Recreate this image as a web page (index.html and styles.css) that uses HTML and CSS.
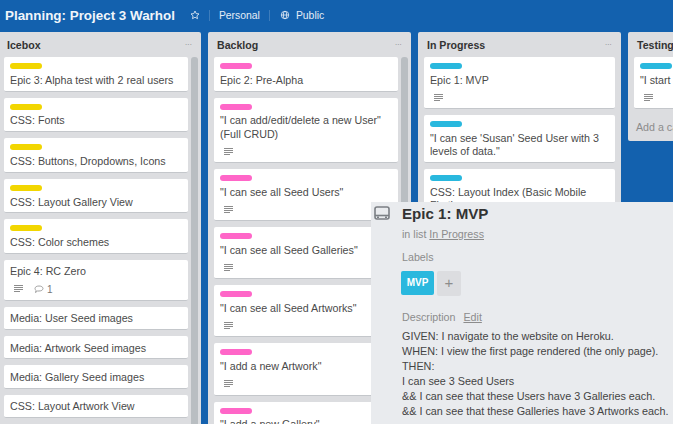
FILE: index.html
```html
<!DOCTYPE html>
<html lang="en">
<head>
    <meta charset="UTF-8">
    <meta name="viewport" content="width=device-width, initial-scale=1.0">
    <title>Planning: Project 3 Warhol</title>
    <link rel="stylesheet" href="styles.css">
</head>
<body>
    <header class="board-header">
        <h1 class="board-title">Planning: Project 3 Warhol</h1>
        <svg class="header-icon star" viewBox="0 0 12 12"><path d="M6 1.2l1.4 3.1 3.4.4-2.5 2.3.7 3.4L6 8.7l-3 1.7.7-3.4L1.200 4.700l3.400-.4z"/></svg>
        <span class="header-sep"></span>
        <span class="header-btn">Personal</span>
        <span class="header-sep"></span>
        <svg class="header-icon globe" viewBox="0 0 12 12"><circle cx="6" cy="6" r="4.500"/><ellipse cx="6" cy="6" rx="2" ry="4.500"/><path d="M1.500 6h9"/></svg>
        <span class="header-btn">Public</span>
    </header>

    <main class="board">
        <section class="list">
            <div class="list-head"><h2>Icebox</h2><span class="list-menu">···</span></div>
            <div class="list-body">
                <div class="cards">
                    <div class="card"><span class="label yellow"></span><p>Epic 3: Alpha test with 2 real users</p></div>
                    <div class="card"><span class="label yellow"></span><p>CSS: Fonts</p></div>
                    <div class="card"><span class="label yellow"></span><p>CSS: Buttons, Dropdowns, Icons</p></div>
                    <div class="card"><span class="label yellow"></span><p>CSS: Layout Gallery View</p></div>
                    <div class="card"><span class="label yellow"></span><p>CSS: Color schemes</p></div>
                    <div class="card">
                        <p>Epic 4: RC Zero</p>
                        <div class="badges">
                            <svg class="desc-icon" viewBox="0 0 10 8"><path d="M0 .5h9M0 2.500h9M0 4.500h9M0 6.500h6"/></svg>
                            <svg class="comment-icon" viewBox="0 0 10 8"><path d="M1 3.500C1 2 2.700 1 5 1s4 1 4 2.500S7.300 6 5 6H3.500L1.500 7.500 2 5.300C1.400 4.800 1 4.200 1 3.500z"/></svg>
                            <span class="badge-count">1</span>
                        </div>
                    </div>
                    <div class="card"><p>Media: User Seed images</p></div>
                    <div class="card"><p>Media: Artwork Seed images</p></div>
                    <div class="card"><p>Media: Gallery Seed images</p></div>
                    <div class="card"><p>CSS: Layout Artwork View</p></div>
                </div>
                <div class="scrollbar"></div>
            </div>
        </section>

        <section class="list">
            <div class="list-head"><h2>Backlog</h2><span class="list-menu">···</span></div>
            <div class="list-body">
                <div class="cards">
                    <div class="card"><span class="label pink"></span><p>Epic 2: Pre-Alpha</p></div>
                    <div class="card"><span class="label pink"></span><p>"I can add/edit/delete a new User" (Full CRUD)</p><div class="badges"><svg class="desc-icon" viewBox="0 0 10 8"><path d="M0 .5h9M0 2.500h9M0 4.500h9M0 6.500h6"/></svg></div></div>
                    <div class="card"><span class="label pink"></span><p>"I can see all Seed Users"</p><div class="badges"><svg class="desc-icon" viewBox="0 0 10 8"><path d="M0 .5h9M0 2.500h9M0 4.500h9M0 6.500h6"/></svg></div></div>
                    <div class="card"><span class="label pink"></span><p>"I can see all Seed Galleries"</p><div class="badges"><svg class="desc-icon" viewBox="0 0 10 8"><path d="M0 .5h9M0 2.500h9M0 4.500h9M0 6.500h6"/></svg></div></div>
                    <div class="card"><span class="label pink"></span><p>"I can see all Seed Artworks"</p><div class="badges"><svg class="desc-icon" viewBox="0 0 10 8"><path d="M0 .5h9M0 2.500h9M0 4.500h9M0 6.500h6"/></svg></div></div>
                    <div class="card"><span class="label pink"></span><p>"I add a new Artwork"</p><div class="badges"><svg class="desc-icon" viewBox="0 0 10 8"><path d="M0 .5h9M0 2.500h9M0 4.500h9M0 6.500h6"/></svg></div></div>
                    <div class="card"><span class="label pink"></span><p>"I add a new Gallery"</p></div>
                </div>
                <div class="scrollbar"></div>
            </div>
        </section>

        <section class="list">
            <div class="list-head"><h2>In Progress</h2><span class="list-menu">···</span></div>
            <div class="list-body">
                <div class="cards cards-wide">
                    <div class="card"><span class="label blue"></span><p>Epic 1: MVP</p><div class="badges"><svg class="desc-icon" viewBox="0 0 10 8"><path d="M0 .5h9M0 2.500h9M0 4.500h9M0 6.500h6"/></svg></div></div>
                    <div class="card"><span class="label blue"></span><p>"I can see 'Susan' Seed User with 3 levels of data."</p></div>
                    <div class="card"><span class="label blue"></span><p>CSS: Layout Index (Basic Mobile First)</p></div>
                </div>
            </div>
        </section>

        <section class="list list-short">
            <div class="list-head"><h2>Testing</h2></div>
            <div class="list-body">
                <div class="cards cards-wide">
                    <div class="card"><span class="label blue"></span><p class="nowrap">"I start the app"</p><div class="badges"><svg class="desc-icon" viewBox="0 0 10 8"><path d="M0 .5h9M0 2.500h9M0 4.500h9M0 6.500h6"/></svg></div></div>
                </div>
            </div>
            <div class="add-card">Add a card...</div>
        </section>
    </main>

    <aside class="card-detail">
        <svg class="detail-icon" viewBox="0 0 16 14"><rect x="1" y="1" width="14" height="12" rx="2"/><path d="M1 9.500h14"/><path class="dots" d="M3 11.200h2M11 11.200h2"/></svg>
        <h3>Epic 1: MVP</h3>
        <div class="in-list">in list <a href="#">In Progress</a></div>
        <div class="detail-heading">Labels</div>
        <div class="detail-labels">
            <span class="mvp">MVP</span>
            <span class="add-label">+</span>
        </div>
        <div class="detail-heading">Description <a class="edit" href="#">Edit</a></div>
        <div class="desc-text">
            GIVEN: I navigate to the website on Heroku.<br>
            WHEN: I view the first page rendered (the only page).<br>
            THEN:<br>
            I can see 3 Seed Users<br>
            &amp;&amp; I can see that these Users have 3 Galleries each.<br>
            &amp;&amp; I can see that these Galleries have 3 Artworks each.
        </div>
    </aside>
</body>
</html>
```
FILE: styles.css
```css
html, body {
    margin: 0;
    padding: 0;
    height: 100%;
    overflow: hidden;
}
body {
    display: flex;
    flex-direction: column;
    background-color: #1361ae;
    font-family: "Liberation Sans", Arial, sans-serif;
    color: #444;
    position: relative;
}

/* header */
.board-header {
    display: flex;
    align-items: center;
    height: 30px;
    flex: none;
    padding: 0 0 2px 5px;
    color: #e4edf6;
}
.board-title {
    margin: 0 15px 0 0;
    font-size: 13.4px;
    font-weight: bold;
    color: #f0f5fa;
}
.header-icon {
    width: 10px;
    height: 10px;
    fill: none;
    stroke: #e4edf6;
    stroke-width: 1;
}
.header-sep {
    width: 1px;
    height: 11px;
    background-color: #3d7dbc;
    margin: 0 9px;
}
.header-btn {
    font-size: 10.4px;
}
.globe {
    margin-left: 1px;
    margin-right: 6px;
}

/* lists */
.board {
    display: flex;
    flex: 1;
    min-height: 0;
    gap: 7.33px;
    margin-left: -2px;
}
.list {
    flex: none;
    width: 202.67px;
    background-color: #dcdde0;
    border-radius: 2px 2px 0 0;
    display: flex;
    flex-direction: column;
    overflow: hidden;
}
.list-short {
    height: 109px;
    border-radius: 2px;
}
.list-short .list-body {
    flex: none;
}
.list-head {
    display: flex;
    justify-content: space-between;
    align-items: center;
    height: 25px;
    flex: none;
    padding: 0 9px;
}
.list-head h2 {
    margin: 0;
    font-size: 10.6px;
    font-weight: bold;
    color: #333;
}
.list-menu {
    font-size: 8px;
    color: #888;
    letter-spacing: -0.4px;
}
.list-body {
    display: flex;
    flex: 1;
    min-height: 0;
    padding: 0 0 0 6px;
    gap: 3px;
}
.cards {
    display: flex;
    flex-direction: column;
    gap: 6px;
    flex: none;
    width: 184px;
}
.cards-wide {
    width: 191px;
}
.scrollbar {
    width: 7px;
    flex: none;
    background-color: #b9bec2;
    border-radius: 3px 3px 0 0;
}
.card {
    background-color: #fff;
    border-radius: 2px;
    border-bottom: 1px solid #c4c7cb;
    padding: 5.5px 6px 3.3px;
    flex: none;
}
.card p {
    margin: 0;
    font-size: 10.7px;
    line-height: 13.5px;
    color: #4a4a4a;
}
.label {
    display: block;
    width: 32px;
    height: 6px;
    border-radius: 3px;
    margin: .5px 0 4.8px;
}
.yellow { background-color: #f2d600; }
.pink { background-color: #ff66c8; }
.blue { background-color: #29b8de; }
.nowrap {
    white-space: nowrap;
}
.badges {
    display: flex;
    align-items: center;
    height: 14px;
    margin-top: 3.5px;
    padding-left: 4px;
}
.desc-icon {
    width: 10px;
    height: 8px;
    fill: none;
    stroke: #8c8c8c;
    stroke-width: 1;
}
.comment-icon {
    width: 10px;
    height: 8px;
    margin-left: 10px;
    fill: none;
    stroke: #8c8c8c;
    stroke-width: .8;
}
.badge-count {
    font-size: 10px;
    color: #777;
    margin-left: 3px;
}
.add-card {
    font-size: 10.7px;
    color: #8c8c8c;
    padding: 12px 8px 0 8px;
    white-space: nowrap;
}

/* card detail overlay */
.card-detail {
    position: absolute;
    left: 371px;
    top: 202px;
    right: 0;
    bottom: 0;
    background-color: #e9ebee;
    padding: 2px 0 0 31px;
    overflow: hidden;
}
.card-detail h3 {
    margin: 0;
    font-size: 15.1px;
    line-height: 20px;
    font-weight: bold;
    color: #333;
}
.detail-icon {
    position: absolute;
    left: 3px;
    top: 4px;
    width: 16px;
    height: 14px;
    fill: none;
    stroke: #7b7f84;
    stroke-width: 1.6;
}
.in-list {
    font-size: 10.7px;
    color: #8c8c8c;
    margin-top: 3px;
    line-height: 14px;
}
.in-list a, .edit {
    color: #8c8c8c;
}
.detail-heading {
    font-size: 10.7px;
    line-height: 14px;
    color: #8c8c8c;
    margin-top: 9px;
}
.edit {
    margin-left: 5px;
}
.detail-labels {
    display: flex;
    gap: 3px;
    margin: 7px 0 14px -1px;
}
.mvp {
    width: 33px;
    height: 24px;
    line-height: 23px;
    text-align: center;
    background-color: #29b8de;
    border-radius: 2px;
    color: #fff;
    font-size: 10px;
    font-weight: bold;
}
.add-label {
    width: 24px;
    height: 25px;
    line-height: 24px;
    text-align: center;
    background-color: #dcdde0;
    border-radius: 2px;
    color: #8c8c8c;
    font-size: 15px;
}
.desc-text {
    font-size: 10.8px;
    line-height: 15px;
    color: #444;
    margin-top: 5px;
    white-space: nowrap;
}
```
